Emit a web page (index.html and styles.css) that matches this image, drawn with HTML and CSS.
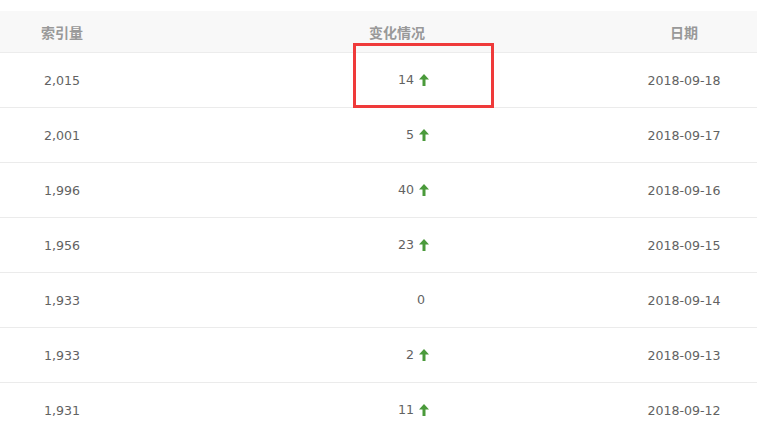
FILE: index.html
```html
<!DOCTYPE html>
<html lang="zh">
<head>
<meta charset="utf-8">
<title>索引量</title>
<link rel="stylesheet" href="styles.css">
</head>
<body>
<div class="table">
  <div class="row head">
    <div class="cell c1">索引量</div>
    <div class="cell c2">变化情况</div>
    <div class="cell c3">日期</div>
  </div>
  <div class="row first">
    <div class="cell c1">2,015</div>
    <div class="cell c2"><span class="num">14</span><svg class="up" viewBox="0 0 10 12"><path d="M5 0 L10 5.5 H6.5 V12 H3.5 V5.5 H0 Z"/></svg></div>
    <div class="cell c3">2018-09-18</div>
    <div class="mark"></div>
  </div>
  <div class="row">
    <div class="cell c1">2,001</div>
    <div class="cell c2"><span class="num">5</span><svg class="up" viewBox="0 0 10 12"><path d="M5 0 L10 5.5 H6.5 V12 H3.5 V5.5 H0 Z"/></svg></div>
    <div class="cell c3">2018-09-17</div>
  </div>
  <div class="row">
    <div class="cell c1">1,996</div>
    <div class="cell c2"><span class="num">40</span><svg class="up" viewBox="0 0 10 12"><path d="M5 0 L10 5.5 H6.5 V12 H3.5 V5.5 H0 Z"/></svg></div>
    <div class="cell c3">2018-09-16</div>
  </div>
  <div class="row">
    <div class="cell c1">1,956</div>
    <div class="cell c2"><span class="num">23</span><svg class="up" viewBox="0 0 10 12"><path d="M5 0 L10 5.5 H6.5 V12 H3.5 V5.5 H0 Z"/></svg></div>
    <div class="cell c3">2018-09-15</div>
  </div>
  <div class="row">
    <div class="cell c1">1,933</div>
    <div class="cell c2"><span class="num zero">0</span></div>
    <div class="cell c3">2018-09-14</div>
  </div>
  <div class="row">
    <div class="cell c1">1,933</div>
    <div class="cell c2"><span class="num">2</span><svg class="up" viewBox="0 0 10 12"><path d="M5 0 L10 5.5 H6.5 V12 H3.5 V5.5 H0 Z"/></svg></div>
    <div class="cell c3">2018-09-13</div>
  </div>
  <div class="row">
    <div class="cell c1">1,931</div>
    <div class="cell c2"><span class="num">11</span><svg class="up" viewBox="0 0 10 12"><path d="M5 0 L10 5.5 H6.5 V12 H3.5 V5.5 H0 Z"/></svg></div>
    <div class="cell c3">2018-09-12</div>
  </div>
</div>
</body>
</html>
```
FILE: styles.css
```css
html, body {
  margin: 0;
  padding: 0;
  background: #fff;
  overflow: hidden;
}
body {
  padding-top: 11px;
  font-family: "DejaVu Sans", "Noto Sans CJK SC", sans-serif;
  font-size: 12.6px;
  color: #626262;
}
.table {
  width: 757px;
}
.row {
  display: grid;
  grid-template-columns: 124px 1fr 146px;
  height: 54px;
  align-items: center;
  border-bottom: 1px solid #ebebeb;
  position: relative;
}
.row.head {
  height: 41px;
  background: #f8f8f8;
  border-bottom: 1px solid #ececec;
  font-family: "Noto Sans CJK SC", sans-serif;
  font-weight: 700;
  font-size: 14px;
  color: #999;
}
.cell {
  white-space: nowrap;
}
.c1, .c3 {
  text-align: center;
}
.c2 {
  display: flex;
  justify-content: flex-end;
  align-items: center;
  padding-right: 182px;
}
.head .c2 {
  justify-content: center;
  padding-right: 0;
  padding-left: 59px;
}
.num {
  line-height: 1;
}
.zero {
  margin-right: 4px;
}
.up {
  width: 10px;
  height: 12px;
  margin-left: 5px;
  margin-top: -1px;
  fill: #4a9a3b;
}
.mark {
  position: absolute;
  left: 353px;
  top: -10px;
  width: 135px;
  height: 59px;
  border: 3px solid #ef3a3a;
}
```
